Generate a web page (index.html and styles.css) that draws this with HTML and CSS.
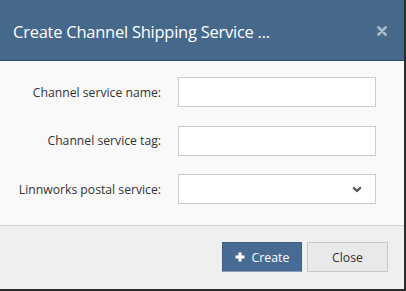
FILE: index.html
```html
<!DOCTYPE html>
<html>
<head lang="en">
    <meta charset="UTF-8">
    <title>Create Channel Shipping Service</title>
    <link rel="stylesheet" href="styles.css">
</head>
<body>
<div id="modal">
    <div class="modal_head">
        <span class="title">Create Channel Shipping Service ...</span>
        <svg class="close_x" width="10" height="10" viewBox="0 0 10 10">
            <path d="M1.5 1.5 L8.5 8.5 M8.5 1.5 L1.5 8.5" stroke="#a8b9cb" stroke-width="2.8" stroke-linecap="round"/>
        </svg>
    </div>
    <div class="modal_body">
        <label class="lbl">Channel service name:</label>
        <input type="text" class="field"/>

        <label class="lbl">Channel service tag:</label>
        <input type="text" class="field"/>

        <label class="lbl">Linnworks postal service:</label>
        <div class="field select">
            <svg width="10" height="7" viewBox="0 0 10 7">
                <path d="M1.2 1.4 L5 5 L8.8 1.4" stroke="#555" stroke-width="2.2" fill="none"/>
            </svg>
        </div>
    </div>
    <div class="modal_foot">
        <button class="btn btn_create">
            <svg width="10" height="10" viewBox="0 0 10 10">
                <path d="M5 0.5 V9.5 M0.5 5 H9.5" stroke="#fff" stroke-width="3"/>
            </svg>
            Create
        </button>
        <button class="btn btn_close">Close</button>
    </div>
</div>
</body>
</html>
```

FILE: styles.css
```css
*{
    padding: 0;
    margin: 0;
    box-sizing: border-box;
}
body{
    background: #2b2b2b;
    font-family: "Open Sans", "Noto Sans", sans-serif;
}
#modal{
    width: 404px;
    height: 289px;
    display: flex;
    flex-direction: column;
}
.modal_head{
    height: 61px;
    background: #46688b;
    border-bottom: 1px solid #2c4a69;
    display: flex;
    align-items: center;
    justify-content: space-between;
    padding: 0 17px 0 13px;
}
.modal_head .title{
    color: #fff;
    font-size: 16.5px;
    letter-spacing: -0.25px;
    margin-top: 2px;
}
.close_x{
    margin-top: 2px;
}
.modal_body{
    height: 164px;
    background: #f9f9f9;
    padding: 16px 28px 21px 0;
    display: grid;
    grid-template-columns: 161px 198px;
    column-gap: 17px;
    row-gap: 18.5px;
    align-items: center;
}
.lbl{
    text-align: right;
    font-size: 12.2px;
    color: #333;
}
.field{
    height: 30px;
    width: 198px;
    border: 1px solid #ccc;
    background: #fff;
    outline: none;
}
.select{
    display: flex;
    align-items: center;
    justify-content: flex-end;
    padding-right: 13px;
}
.modal_foot{
    flex: 1;
    background: #efefef;
    border-top: 1px solid #d2d2d2;
    display: flex;
    justify-content: flex-end;
    align-items: flex-start;
    padding: 16px 16px 0 0;
    gap: 5px;
}
.btn{
    height: 30px;
    width: 81px;
    font-family: "Open Sans", "Noto Sans", sans-serif;
    font-size: 12.3px;
    display: flex;
    align-items: center;
    justify-content: center;
    gap: 7px;
}
.btn_create{
    width: 80px;
    background: #486b94;
    color: #fff;
    border: 1px solid #3f5f85;
    border-bottom-color: #8aa0b8;
}
.btn_close{
    background: #e8e9eb;
    color: #333;
    border: 1px solid #c8c8c8;
}
```
